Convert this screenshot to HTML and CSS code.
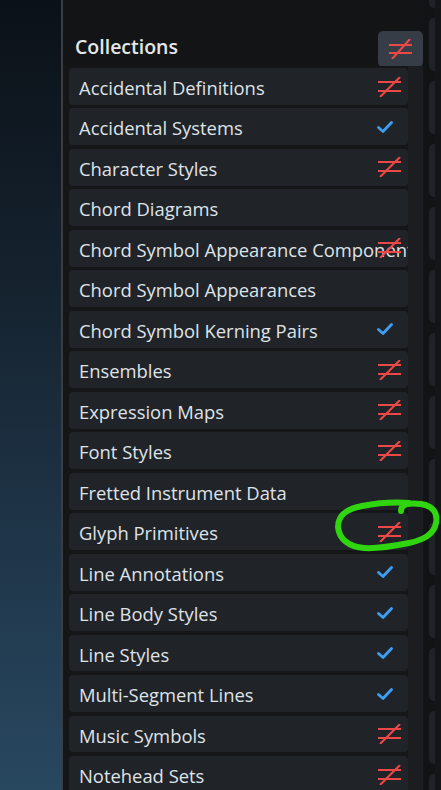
FILE: index.html
```html
<!DOCTYPE html>
<html lang="en">
<head>
    <meta charset="UTF-8">
    <meta name="viewport" content="width=device-width, initial-scale=1.0">
    <title>Collections</title>
    <link rel="stylesheet" href="styles.css">
</head>
<body>
    <div class="backdrop"></div>
    <div class="divider"></div>

    <main class="panel">
        <header class="panel-head">
            <h1>Collections</h1>
            <button type="button" class="head-btn">
                <svg class="neq" viewBox="0 0 25 20"><path d="M1 6H24M1 14H24M4 20L22 0"/></svg>
            </button>
        </header>

        <div class="list-wrap">
            <ul class="list">
                <li class="row"><span>Accidental Definitions</span><svg class="neq" viewBox="0 0 25 20"><path d="M1 5H24M1 14H24M3 20L23 0"/></svg></li>
                <li class="row"><span>Accidental Systems</span><svg class="check" viewBox="0 0 16 12"><path d="M1.5 6.5L6 10.5L14.5 1.5"/></svg></li>
                <li class="row"><span>Character Styles</span><svg class="neq" viewBox="0 0 25 20"><path d="M1 5H24M1 14H24M3 20L23 0"/></svg></li>
                <li class="row"><span>Chord Diagrams</span></li>
                <li class="row"><span>Chord Symbol Appearance Components</span><svg class="neq" viewBox="0 0 25 20"><path d="M1 5H24M1 14H24M3 20L23 0"/></svg></li>
                <li class="row"><span>Chord Symbol Appearances</span></li>
                <li class="row"><span>Chord Symbol Kerning Pairs</span><svg class="check" viewBox="0 0 16 12"><path d="M1.5 6.5L6 10.5L14.5 1.5"/></svg></li>
                <li class="row"><span>Ensembles</span><svg class="neq" viewBox="0 0 25 20"><path d="M1 5H24M1 14H24M3 20L23 0"/></svg></li>
                <li class="row"><span>Expression Maps</span><svg class="neq" viewBox="0 0 25 20"><path d="M1 5H24M1 14H24M3 20L23 0"/></svg></li>
                <li class="row"><span>Font Styles</span><svg class="neq" viewBox="0 0 25 20"><path d="M1 5H24M1 14H24M3 20L23 0"/></svg></li>
                <li class="row"><span>Fretted Instrument Data</span></li>
                <li class="row"><span>Glyph Primitives</span><svg class="neq" viewBox="0 0 25 20"><path d="M1 5H24M1 14H24M3 20L23 0"/></svg></li>
                <li class="row"><span>Line Annotations</span><svg class="check" viewBox="0 0 16 12"><path d="M1.5 6.5L6 10.5L14.5 1.5"/></svg></li>
                <li class="row"><span>Line Body Styles</span><svg class="check" viewBox="0 0 16 12"><path d="M1.5 6.5L6 10.5L14.5 1.5"/></svg></li>
                <li class="row"><span>Line Styles</span><svg class="check" viewBox="0 0 16 12"><path d="M1.5 6.5L6 10.5L14.5 1.5"/></svg></li>
                <li class="row"><span>Multi-Segment Lines</span><svg class="check" viewBox="0 0 16 12"><path d="M1.5 6.5L6 10.5L14.5 1.5"/></svg></li>
                <li class="row"><span>Music Symbols</span><svg class="neq" viewBox="0 0 25 20"><path d="M1 5H24M1 14H24M3 20L23 0"/></svg></li>
                <li class="row"><span>Notehead Sets</span><svg class="neq" viewBox="0 0 25 20"><path d="M1 5H24M1 14H24M3 20L23 0"/></svg></li>
            </ul>
            <div class="track"></div>
        </div>
    </main>

    <aside class="side">
        <div class="side-gap"></div>
        <div class="side-cards">
            <div class="side-card first"></div>
            <div class="side-card"></div>
            <div class="side-card"></div>
            <div class="side-card"></div>
            <div class="side-card"></div>
            <div class="side-card"></div>
            <div class="side-card"></div>
            <div class="side-card"></div>
            <div class="side-card"></div>
            <div class="side-card"></div>
            <div class="side-card"></div>
            <div class="side-card"></div>
            <div class="side-card"></div>
            <div class="side-card"></div>
        </div>
        <div class="side-edge"></div>
    </aside>

    <!-- hand drawn highlight -->
    <svg class="scribble" viewBox="0 0 441 790">
        <path d="M401 511C401 503 410 503 421 504C433 506 438 513 436 523C434 534 424 540 409 543C394 546 379 549 364 548C349 547 339 539 338 527C338 515 346 509 362 506C378 503 395 502 409 503"/>
    </svg>
</body>
</html>
```

FILE: styles.css
```css
* {
    box-sizing: border-box;
}
body {
    margin: 0;
    padding: 0;
    display: flex;
    height: 790px;
    overflow: hidden;
    background-color: #131416;
    font-family: "Open Sans", "Noto Sans", sans-serif;
}
.backdrop {
    width: 61px;
    flex-shrink: 0;
    background: linear-gradient(to bottom, #0b1118 0%, #15222e 35%, #1e3346 65%, #284860 100%);
}
.divider {
    width: 2px;
    flex-shrink: 0;
    background-color: #3a3e43;
}
.panel {
    width: 360px;
    flex-shrink: 0;
    display: flex;
    flex-direction: column;
    background-color: #131416;
}
.panel-head {
    height: 66px;
    flex-shrink: 0;
    display: flex;
    align-items: flex-end;
    justify-content: space-between;
    padding: 0 0 0 12px;
}
.panel-head h1 {
    margin: 0 0 6px 0;
    font-size: 19.5px;
    font-weight: 600;
    color: #e4e7ea;
}
.head-btn {
    width: 45px;
    height: 36px;
    margin-bottom: -1px;
    border: 0;
    border-radius: 5px;
    background-color: #373d46;
    display: flex;
    align-items: center;
    justify-content: center;
    padding: 0;
}
.list-wrap {
    flex: 1;
    display: flex;
    min-height: 0;
}
.list {
    list-style: none;
    margin: 0;
    padding: 2px 0 0 6px;
    width: 345px;
    display: flex;
    flex-direction: column;
    gap: 3.8px;
    background-color: #141618;
}
.track {
    width: 15px;
    background-color: #1b1d20;
}
.row {
    position: relative;
    flex-shrink: 0;
    height: 36.7px;
    display: flex;
    align-items: center;
    padding: 2px 0 0 10px;
    border-radius: 4px;
    background-color: #202327;
    overflow: hidden;
    white-space: nowrap;
    font-size: 18.4px;
    color: #dfe3e7;
}
.neq {
    width: 25px;
    height: 20px;
    fill: none;
    stroke: #ec4848;
    stroke-width: 2.1;
}
.row .neq {
    position: absolute;
    right: 6px;
    top: 8.5px;
}
.check {
    position: absolute;
    right: 15px;
    top: 12.5px;
    width: 16px;
    height: 12px;
    fill: none;
    stroke: #3d9ef4;
    stroke-width: 2.8;
    stroke-linecap: round;
    stroke-linejoin: round;
}
.side {
    flex: 1;
    display: flex;
}
.side-gap {
    width: 6px;
    background-color: #121314;
}
.side-cards {
    width: 6px;
    display: flex;
    flex-direction: column;
    gap: 10px;
    background-color: #121314;
}
.side-card {
    flex-shrink: 0;
    height: 53px;
    border-radius: 5px 0 0 5px;
    background-color: #1f2226;
}
.side-card.first {
    margin-top: -45px;
}
.side-edge {
    flex: 1;
    background-color: #141517;
}
.scribble {
    position: absolute;
    left: 0;
    top: 0;
    width: 441px;
    height: 790px;
    pointer-events: none;
    fill: none;
    stroke: #2fd60f;
    stroke-width: 6;
    stroke-linecap: round;
}
```
